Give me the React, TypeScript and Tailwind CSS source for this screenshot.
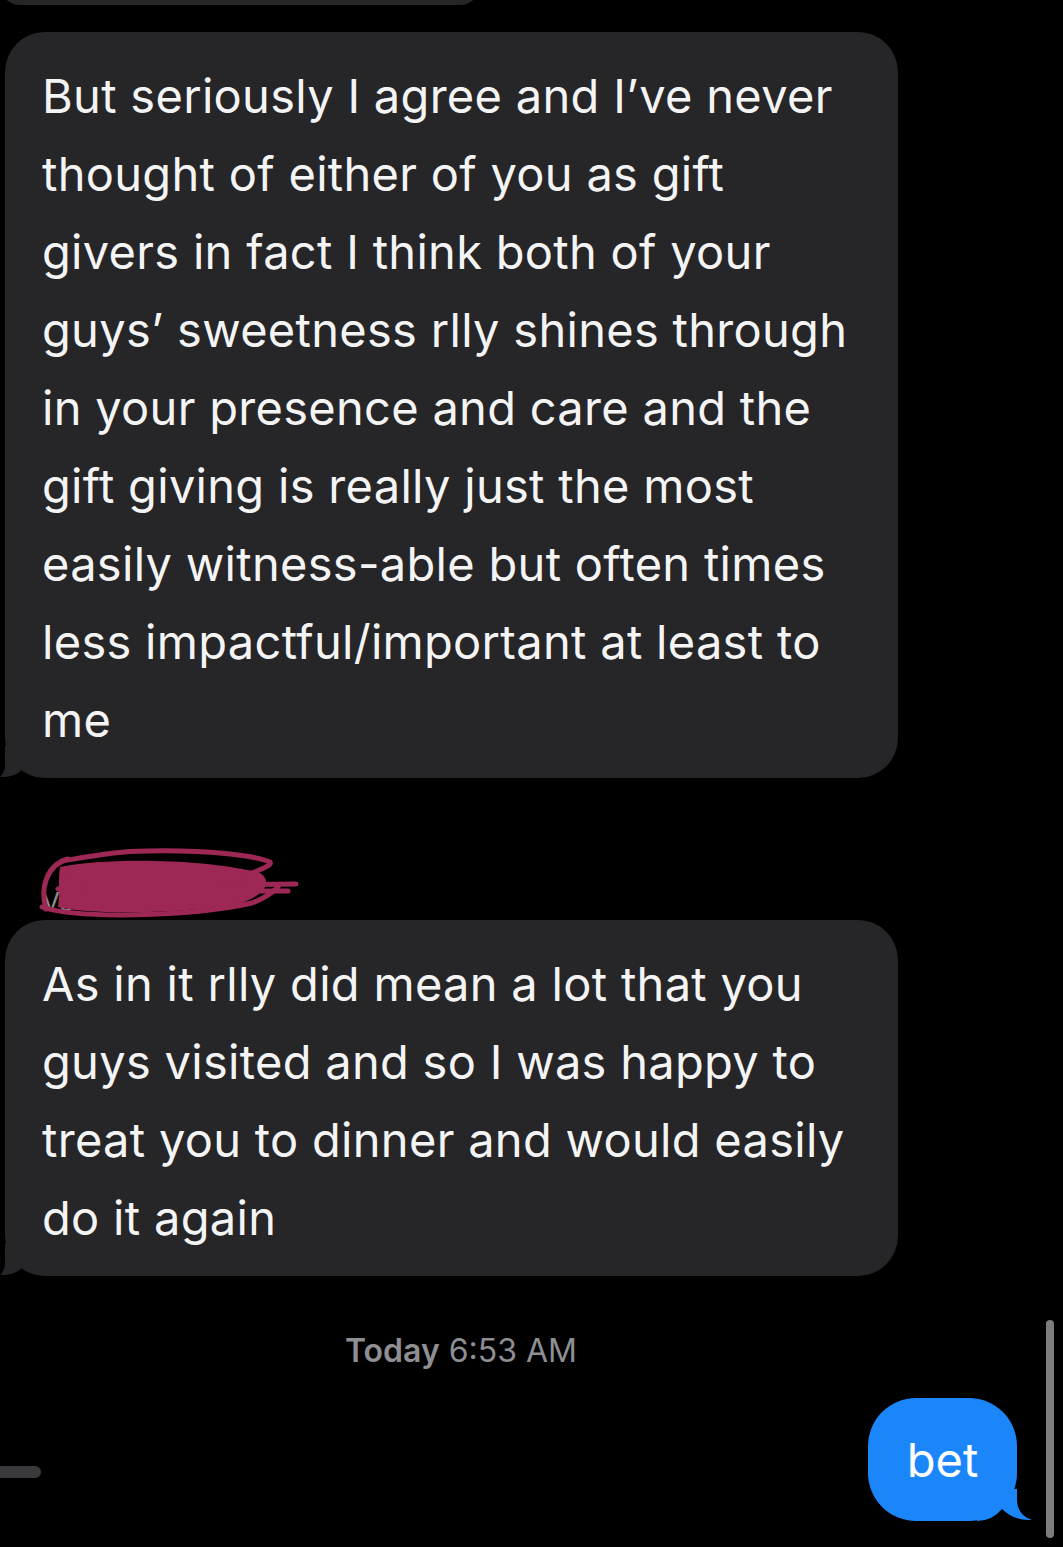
const GRAY = "bg-[#262628]";

const first = [
  "But seriously I agree and I’ve never",
  "thought of either of you as gift",
  "givers in fact I think both of your",
  "guys’ sweetness rlly shines through",
  "in your presence and care and the",
  "gift giving is really just the most",
  "easily witness-able but often times",
  "less impactful/important at least to",
  "me",
];

const second = [
  "As in it rlly did mean a lot that you",
  "guys visited and so I was happy to",
  "treat you to dinner and would easily",
  "do it again",
];

function LeftTail() {
  return (
    <svg
      className="absolute left-[-5px] bottom-0"
      width="60"
      height="32"
      viewBox="0 0 60 32"
    >
      <path
        d="M5 0 L5 14 Q6 26 0 31 Q14 32 23 23 Q32 32 55 32 L55 0 Z"
        fill="#262628"
      />
    </svg>
  );
}

function RightTail() {
  return (
    <svg
      className="absolute right-[-15px] bottom-0"
      width="60"
      height="32"
      viewBox="0 0 60 32"
    >
      <path
        d="M45 0 L45 10 Q45 26 60 31 Q42 32 30 20 Q20 32 5 32 L5 0 Z"
        fill="#1b86fa"
      />
    </svg>
  );
}

function Received({ lines }: { lines: string[] }) {
  return (
    <div className={`relative ml-[5px] w-[893px] rounded-[40px] ${GRAY} pl-[37px] pt-[25px] pb-[19px]`}>
      {lines.map((l) => (
        <div
          key={l}
          className="whitespace-nowrap text-[47px] leading-[78px] tracking-[0.3px] text-[#f4f4f5]"
        >
          {l}
        </div>
      ))}
      <LeftTail />
    </div>
  );
}

function Scribble() {
  return (
    <svg width="262" height="76" viewBox="0 0 262 76" className="ml-[38px]">
      <text x="4" y="66" fontSize="26" fill="#8e8e93" fontFamily="Inter, sans-serif">
        Ve
      </text>
      <path
        d="M22 22 C70 12 170 14 222 28 C238 38 222 58 182 62 C120 69 48 69 20 62 C22 50 20 34 22 22 Z"
        fill="#9d2856"
      />
      <g fill="none" stroke="#9d2856" strokeWidth="5" strokeLinecap="round">
        <path d="M24 16 C60 10 80 6 110 6 C170 5 215 10 232 17 C236 22 205 30 185 40" />
        <path d="M30 14 C8 20 2 44 8 64" />
        <path d="M4 62 C40 74 150 72 214 58 C230 52 236 46 240 42" />
        <path d="M180 40 L258 39" />
        <path d="M180 46 L250 46" />
        <path d="M30 30 C50 26 70 24 90 28" />
        <path d="M20 44 C28 40 38 40 44 44" />
      </g>
    </svg>
  );
}

export default function App() {
  return (
    <div
      className="relative h-[1547px] w-[1063px] overflow-hidden bg-black"
      style={{ fontFamily: "Inter, 'Noto Sans', sans-serif" }}
    >
      <div className="flex flex-col">
        <div className="flex h-[5px] items-end overflow-hidden">
          <div className={`h-[40px] w-[480px] shrink-0 rounded-[38px] ${GRAY}`} />
        </div>

        <div className="mt-[27px]">
          <Received lines={first} />
        </div>

        <div className="mt-[67px] h-[75px]">
          <Scribble />
        </div>

        <Received lines={second} />

        <div className="mt-[54px] pr-[141px] text-center text-[32px] leading-[42px] text-[#8e8e93]">
          <span className="font-semibold">Today</span> 6:53 AM
        </div>

        <div className="mt-[26px] flex items-start justify-between pr-[46px]">
          <div className="mt-[68px] h-[12px] w-[41px] rounded-r-full bg-[#3a3a3c]" />
          <div className="relative flex h-[123px] w-[149px] items-center justify-center rounded-[48px] bg-[#1b86fa]">
            <span className="text-[47px] leading-none text-white">bet</span>
            <RightTail />
          </div>
        </div>
      </div>

      <div className="absolute left-[1046px] top-[1320px] h-[218px] w-[8px] rounded-full bg-[#7d7d7d]" />
    </div>
  );
}
